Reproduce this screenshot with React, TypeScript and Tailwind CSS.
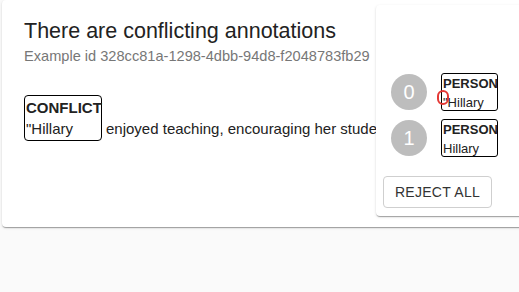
import React from 'react';

const font = { fontFamily: '"Liberation Sans", Arial, sans-serif' };

const PersonTag: React.FC<{ marked?: boolean }> = ({ marked }) => (
  <div className="relative w-[57px] h-[38px] border border-black rounded-[3px] px-[1px] leading-[19px]">
    <div className="text-[13px] font-bold text-[#222]">PERSON</div>
    <div className="text-[13px] text-[#222]">{marked ? '"Hillary' : 'Hillary'}</div>
    {marked && (
      <span className="absolute left-[-5px] top-[16px] w-[12px] h-[15px] rounded-full border-2 border-[#e53935]" />
    )}
  </div>
);

const Row: React.FC<{ n: number; marked?: boolean }> = ({ n, marked }) => (
  <div className="flex items-center gap-[14px]">
    <div className="w-[36px] h-[36px] rounded-full bg-[#bdbdbd] text-white text-[20px] flex items-center justify-center">
      {n}
    </div>
    <PersonTag marked={marked} />
  </div>
);

export default function App() {
  return (
    <div className="relative w-[519px] h-[292px] bg-[#fafafa] overflow-hidden" style={font}>
      {/* main card */}
      <div className="ml-[2px] w-[540px] h-[227px] bg-white rounded-[4px] shadow-[0_2px_1px_-1px_rgba(0,0,0,0.2),0_1px_1px_0_rgba(0,0,0,0.14),0_1px_3px_0_rgba(0,0,0,0.12)] pl-[22px] pt-[18px]">
        <h1 className="text-[21.5px] leading-[26px] text-[#222]">There are conflicting annotations</h1>
        <div className="mt-[3px] text-[14.6px] leading-[18px] text-[#777]">Example id 328cc81a-1298-4dbb-94d8-f2048783fb29</div>
        <div className="mt-[30px] flex items-end gap-[4px] text-[15px] text-[#222]">
          <div className="w-[78px] h-[46px] border border-black rounded-[4px] pl-[1px] leading-[21px]">
            <div className="font-bold pt-[1px]">CONFLICT</div>
            <div>"Hillary</div>
          </div>
          <div className="whitespace-nowrap leading-[21px] pb-[2px]">enjoyed teaching, encouraging her students</div>
        </div>
      </div>

      {/* conflict panel */}
      <div className="absolute left-[376px] top-[5px] w-[170px] h-[211px] bg-white rounded-[4px] shadow-[0_2px_1px_-1px_rgba(0,0,0,0.2),0_1px_1px_0_rgba(0,0,0,0.14),0_1px_3px_0_rgba(0,0,0,0.12)] pl-[15px] pt-[68px]">
        <div className="flex flex-col gap-[8px]">
          <Row n={0} marked />
          <Row n={1} />
        </div>
        <button className="mt-[19px] ml-[-8px] w-[109px] h-[32px] border border-[#cfcfcf] rounded-[4px] text-[14px] text-[#333] tracking-[0.3px]">
          REJECT ALL
        </button>
      </div>
    </div>
  );
}
